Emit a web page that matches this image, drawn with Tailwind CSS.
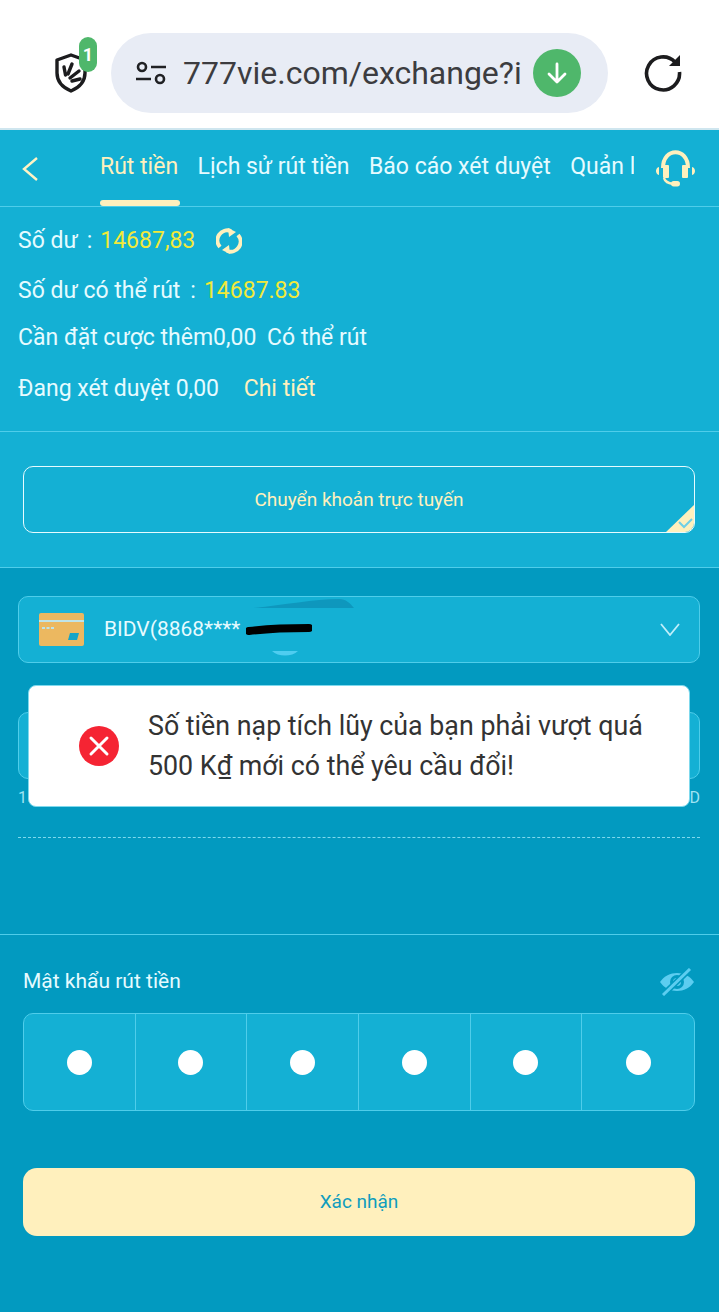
<!DOCTYPE html>
<html lang="vi">
<head>
    <meta charset="UTF-8">
    <title>777vie</title>
    <script src="https://cdn.jsdelivr.net/npm/@tailwindcss/browser@4"></script>
</head>
<body class="font-['Roboto',sans-serif] bg-[#029ac0]">
<div class="relative w-[719px] h-[1312px] overflow-hidden">
    <!-- browser bar -->
    <header class="h-[130px] bg-white border-b-2 border-[#cfe6ef] flex items-start">
        <div class="relative ml-[54px] mt-[53px] w-[34px] h-[40px]">
            <svg class="absolute left-0 top-0" width="34" height="40" viewBox="0 0 34 40">
                <path d="M17 2 L31 7 V20 C31 29 24 35 17 38 C10 35 3 29 3 20 V7 Z" fill="none" stroke="#1c1c1e" stroke-width="3.4" stroke-linejoin="round"/>
                <path d="M10 14 L11.5 22 M18 11 L14 21 M25 18 L16 25 M26 26 L18 28" stroke="#1c1c1e" stroke-width="3.4" stroke-linecap="round"/>
            </svg>
            <span class="absolute left-[25px] top-[-16px] w-[18px] h-[35px] rounded-full bg-[#4fb76b] text-white text-[18px] font-bold flex items-center justify-center">1</span>
        </div>
        <div class="ml-[23px] mt-[33px] w-[497px] h-[80px] rounded-[40px] bg-[#e8ecf5] flex items-center">
            <svg class="ml-[25px]" width="30" height="24" viewBox="0 0 30 24" fill="none" stroke="#202124" stroke-width="2.6">
                <circle cx="6" cy="6" r="4"/><circle cx="24" cy="18" r="4"/>
                <path d="M15 6 H30 M0 18 H15"/>
            </svg>
            <span class="ml-[17px] w-[342px] overflow-hidden whitespace-nowrap text-[32px] leading-[40px] text-[#3c3c40]">777vie.com/exchange?i</span>
            <span class="ml-[8px] w-[48px] h-[48px] rounded-full bg-[#4fb76b] flex items-center justify-center">
                <svg width="24" height="24" viewBox="0 0 24 24" fill="none" stroke="#fff" stroke-width="2.8" stroke-linecap="round" stroke-linejoin="round"><path d="M12 3 V21 M4 13 L12 21 L20 13"/></svg>
            </span>
        </div>
        <svg class="ml-[35px] mt-[52px]" width="40" height="40" viewBox="0 0 40 40" fill="none" stroke="#1c1c1e" stroke-width="3.6">
            <path d="M32 10 A16.5 16.5 0 1 0 36.5 20"/>
            <path d="M37 3 V14 H26" fill="#1c1c1e" stroke="none"/>
        </svg>
    </header>

    <!-- tabs -->
    <nav class="h-[77px] bg-[#14b0d4] border-b border-[#4fcdea] flex relative">
        <svg class="ml-[21px] mt-[26px]" width="18" height="26" viewBox="0 0 18 26" fill="none" stroke="#fff3c4" stroke-width="2.4"><path d="M16 2 L3 13 L16 24"/></svg>
        <div class="ml-[61px] w-[534px] overflow-hidden flex gap-[19.5px] whitespace-nowrap text-[23px] leading-[26px] pt-[24px] text-[#e6fbff]">
            <span class="relative text-[#fff0bd]">Rút tiền<span class="absolute left-0 right-[-2px] top-[46px] h-[6px] rounded-full bg-[#fff0bd]"></span></span>
            <span>Lịch sử rút tiền</span>
            <span>Báo cáo xét duyệt</span>
            <span>Quản lý</span>
        </div>
        <svg class="ml-[21px] mt-[20px]" width="42" height="38" viewBox="0 0 42 38" fill="#fff0bd">
            <path d="M8 18 C8 -3 33 -3 33 18" fill="none" stroke="#fff0bd" stroke-width="4"/>
            <rect x="8" y="15" width="6" height="13" rx="1"/><rect x="27" y="15" width="6" height="13" rx="1"/>
            <path d="M4 17 C0 18 0 24 4 25 Z M37 17 C41 18 41 24 37 25 Z"/>
            <path d="M9 28 C10 32 13 33 18 34" fill="none" stroke="#fff0bd" stroke-width="2.4"/>
            <rect x="16" y="31" width="9" height="5.5" rx="2.7"/>
        </svg>
    </nav>

    <!-- balance -->
    <section class="h-[225px] bg-[#14b0d4] border-b border-[#4fcdea] px-[18px] text-[23px] leading-[30px] text-[#e6fbff] relative">
        <div class="flex items-center pt-[19px]">
            <span>Số dư</span><span class="ml-[9px]">:</span><span class="ml-[8px] text-[#f2e93a]">14687,83</span>
            <svg class="ml-[21px]" width="26" height="26" viewBox="0 0 26 26" fill="none" stroke="#fff0bd" stroke-width="4">
                <path d="M4 19 A10 10 0 0 1 15 3"/><path d="M22 7 A10 10 0 0 1 11 23"/>
                <path d="M12 0 L20 4 L13 9 Z M14 26 L6 22 L13 17 Z" fill="#fff0bd" stroke="none"/>
            </svg>
        </div>
        <div class="mt-[20px] flex"><span>Số dư có thể rút</span><span class="ml-[10px]">:</span><span class="ml-[8px] text-[#f2e93a]">14687.83</span></div>
        <div class="mt-[17px]">Cần đặt cược thêm0,00 <span class="ml-[5px]">Có thể rút</span></div>
        <div class="mt-[21px]">Đang xét duyệt 0,00 <span class="ml-[19px] text-[#fff0bd]">Chi tiết</span></div>
    </section>

    <!-- method -->
    <section class="h-[136px] bg-[#14b0d4] border-b border-[#4fcdea] pt-[34px] pl-[23px] pr-[24px]">
        <div class="relative h-[67px] rounded-[10px] border border-[#e6fbff] flex items-center justify-center pt-[2px] text-[19px] text-[#fff0bd] overflow-hidden">
            Chuyển khoản trực tuyến
            <svg class="absolute right-0 bottom-0" width="28" height="27" viewBox="0 0 28 27">
                <path d="M28 0 V27 H0 Z" fill="#fff0bd"/>
                <path d="M13 17 L18 22 L26 14" fill="none" stroke="#6fcfe6" stroke-width="2"/>
            </svg>
        </div>
    </section>

    <!-- form -->
    <section class="pl-[18px] pr-[19px] pt-[28px]">
        <div class="relative h-[67px] rounded-[10px] bg-[#14b0d4] border border-[#4fcdea] flex items-center text-[21px] text-[#e6fbff]">
            <svg class="ml-[20px]" width="45" height="33" viewBox="0 0 45 33">
                <rect width="45" height="33" rx="2" fill="#ecb860"/>
                <rect y="7" width="45" height="2" fill="#bfe4e8"/>
                <path d="M31 20 H40 L38 27 H29 Z" fill="#14a5c8"/>
                <path d="M3 15 H6 M7.5 15 H10.5 M12 15 H15" stroke="#bfe4e8" stroke-width="2"/>
            </svg>
            <span class="ml-[20px]">BIDV(8868****</span>
            <svg class="ml-[6px]" width="66" height="14" viewBox="0 0 66 14"><path d="M3 8 C20 6 45 5 63 5" stroke="#000" stroke-width="8" stroke-linecap="round" fill="none"/></svg>
            <svg class="ml-auto mr-[19px]" width="20" height="13" viewBox="0 0 20 13" fill="none" stroke="#bfeefa" stroke-width="1.8"><path d="M1 1 L10 12 L19 1"/></svg>
            <svg class="absolute left-[235px] top-[2px]" width="100" height="9" viewBox="0 0 100 9"><path d="M0 9 C30 6 60 0 85 0 C92 0 96 4 100 9 Z" fill="#0e97bd"/></svg>
            <svg class="absolute left-[253px] top-[54px]" width="26" height="5" viewBox="0 0 26 5"><path d="M0 0 H26 C20 6 6 6 0 0 Z" fill="#4fcdf0"/></svg>
        </div>
        <div class="mt-[49px] h-[67px] rounded-[10px] bg-[#14b0d4] border border-[#4fcdea]"></div>
        <div class="mt-[9px] flex justify-between text-[16px] leading-[20px] text-[#9fe3f3]"><span>1</span><span>D</span></div>
        <div class="mt-[29px] border-t border-dashed border-[#7fd9ed]"></div>
    </section>

    <!-- password -->
    <section class="mt-[96px] border-t border-[#4fcdea] pl-[23px] pr-[24px]">
        <div class="flex items-center justify-between h-[78px] text-[21px] text-[#e6fbff]">
            <span class="mt-[16px]">Mật khẩu rút tiền</span>
            <svg class="mt-[16px] mr-[1px]" width="34" height="28" viewBox="0 0 34 28">
                <path d="M0 14 C8 2 26 2 34 14 C26 26 8 26 0 14 Z" fill="#5ccdf0"/>
                <circle cx="17" cy="14" r="7" fill="#029ac0"/>
                <circle cx="17" cy="14" r="4" fill="#5ccdf0"/>
                <path d="M3 27 L30 1" stroke="#029ac0" stroke-width="6"/>
                <path d="M3 27 L30 1" stroke="#5ccdf0" stroke-width="3"/>
            </svg>
        </div>
        <div class="h-[98px] grid grid-cols-6 rounded-[10px] bg-[#14b0d4] border border-[#4fcdea] divide-x divide-[#4fcdea]">
            <div class="flex items-center justify-center"><span class="w-[25px] h-[25px] rounded-full bg-white"></span></div>
            <div class="flex items-center justify-center"><span class="w-[25px] h-[25px] rounded-full bg-white"></span></div>
            <div class="flex items-center justify-center"><span class="w-[25px] h-[25px] rounded-full bg-white"></span></div>
            <div class="flex items-center justify-center"><span class="w-[25px] h-[25px] rounded-full bg-white"></span></div>
            <div class="flex items-center justify-center"><span class="w-[25px] h-[25px] rounded-full bg-white"></span></div>
            <div class="flex items-center justify-center"><span class="w-[25px] h-[25px] rounded-full bg-white"></span></div>
        </div>
        <button class="mt-[57px] w-full h-[68px] rounded-[14px] bg-[#fff0bd] text-[19px] text-[#0f9dbd]">Xác nhận</button>
    </section>

    <!-- toast -->
    <div class="absolute left-[28px] top-[685px] w-[662px] h-[122px] rounded-[8px] bg-white border border-[#7fd9ed] flex items-center">
        <svg class="ml-[50px] shrink-0" width="40" height="40" viewBox="0 0 40 40">
            <circle cx="20" cy="20" r="20" fill="#f52433"/>
            <path d="M12 12 L28 28 M28 12 L12 28" stroke="#fff" stroke-width="3" stroke-linecap="round"/>
        </svg>
        <p class="ml-[29px] text-[26.8px] leading-[40px] text-[#333]">Số tiền nạp tích lũy của bạn phải vượt quá 500 K₫ mới có thể yêu cầu đổi!</p>
    </div>
</div>
</body>
</html>
